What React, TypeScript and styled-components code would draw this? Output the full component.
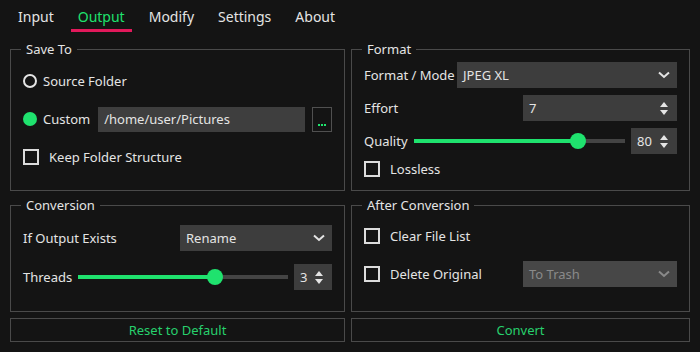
import React from "react";
import styled, { createGlobalStyle } from "styled-components";

const GREEN = "#1fe26e";
const TEXT = "#e4e4e4";
const LINE = "#4a4a4a";

const GlobalStyle = createGlobalStyle`
  html, body { margin: 0; padding: 0; background: #141414; }
  body {
    font-family: "Noto Sans", "Open Sans", sans-serif;
    font-size: 13px;
    color: ${TEXT};
  }
  * { box-sizing: border-box; }
`;

const Window = styled.div`
  width: 700px;
  height: 352px;
  display: flex;
  flex-direction: column;
`;

const TabBar = styled.div`
  display: flex;
  gap: 10px;
  padding-left: 11px;
  height: 32px;
`;

const Tab = styled.div<{ $active?: boolean }>`
  display: flex;
  align-items: center;
  padding: 3px 7px 0;
  font-size: 14px;
  color: ${(p) => (p.$active ? GREEN : TEXT)};
  border-bottom: 3px solid ${(p) => (p.$active ? "#e2195b" : "transparent")};
`;

const Body = styled.div`
  flex: 1;
  display: grid;
  grid-template-columns: 335px 1fr;
  grid-template-rows: 150px 115px 24px;
  gap: 6px;
  padding: 9px 10px 10px;
`;

const Group = styled.fieldset<{ $pt: number; $gap?: number }>`
  margin: 0;
  min-width: 0;
  border: 1px solid ${LINE};
  padding: ${(p) => p.$pt}px 12px 0 12px;
  display: flex;
  flex-direction: column;
  gap: ${(p) => p.$gap ?? 12}px;
`;

const Legend = styled.legend`
  margin-left: -2px;
  padding: 0 5px;
  font-size: 13px;
  line-height: 16px;
  color: ${TEXT};
`;

const Row = styled.div<{ $h?: number; $gap?: number }>`
  display: flex;
  align-items: center;
  gap: ${(p) => p.$gap ?? 7}px;
  height: ${(p) => p.$h ?? 26}px;
  flex-shrink: 0;
`;

const Label = styled.span`
  white-space: nowrap;
  flex-shrink: 0;
`;

const Radio = styled.span<{ $checked?: boolean }>`
  width: 14px;
  height: 14px;
  border-radius: 50%;
  flex-shrink: 0;
  margin-right: -1px;
  border: ${(p) => (p.$checked ? "none" : `2px solid ${TEXT}`)};
  background: ${(p) => (p.$checked ? GREEN : "transparent")};
`;

const Check = styled.span`
  width: 16px;
  height: 16px;
  flex-shrink: 0;
  border: 2px solid #dcdcdc;
  margin-right: 3px;
`;

const PathInput = styled.input`
  flex: 1;
  min-width: 0;
  height: 25px;
  border: none;
  outline: none;
  background: #3e3e3e;
  color: ${TEXT};
  font: inherit;
  padding: 0 6px;
  margin-left: 1px;
`;

const Browse = styled.button`
  width: 20px;
  height: 25px;
  padding: 0 0 5px;
  background: transparent;
  border: 1px solid #505050;
  display: flex;
  align-items: flex-end;
  justify-content: center;
  gap: 1px;
`;

const Dot = styled.span`
  width: 2px;
  height: 2px;
  background: ${GREEN};
`;

const Field = styled.div<{ $w?: number; $disabled?: boolean }>`
  width: ${(p) => (p.$w ? `${p.$w}px` : "auto")};
  margin-left: auto;
  height: 26px;
  flex-shrink: 0;
  display: flex;
  align-items: center;
  justify-content: space-between;
  padding: 0 7px 0 6px;
  background: ${(p) => (p.$disabled ? "#474747" : "#3d3d3d")};
  color: ${(p) => (p.$disabled ? "#8a8a8a" : TEXT)};
`;

const SliderTrack = styled.div`
  flex: 1;
  height: 16px;
  position: relative;
  &::before {
    content: "";
    position: absolute;
    left: 0;
    right: 0;
    top: 6px;
    height: 4px;
    background: #444;
  }
`;

const SliderFill = styled.div`
  position: absolute;
  left: 0;
  top: 6px;
  height: 4px;
  background: ${GREEN};
`;

const SliderHandle = styled.div`
  position: absolute;
  top: 0;
  width: 16px;
  height: 16px;
  border-radius: 50%;
  background: ${GREEN};
`;

const ActionButton = styled.button`
  background: transparent;
  border: 1px solid ${LINE};
  color: #27d06d;
  font: inherit;
  font-size: 13px;
  padding: 0;
`;

const Chevron = ({ color }: { color: string }) => (
  <svg width="12" height="8" viewBox="0 0 12 8">
    <polyline points="1,1.5 6,6 11,1.5" fill="none" stroke={color} strokeWidth="2" />
  </svg>
);

const Arrows = () => (
  <svg width="8" height="15" viewBox="0 0 8 15">
    <polygon points="0,6 4,1 8,6" fill="#e4e4e4" />
    <polygon points="0,9 8,9 4,14" fill="#e4e4e4" />
  </svg>
);

const Select = ({ value, width, disabled }: { value: string; width: number; disabled?: boolean }) => (
  <Field $w={width} $disabled={disabled}>
    <span>{value}</span>
    <Chevron color={disabled ? "#8a8a8a" : "#e4e4e4"} />
  </Field>
);

const Spin = ({ value, width }: { value: string; width: number }) => (
  <Field $w={width} style={{ paddingRight: 9 }}>
    <span>{value}</span>
    <Arrows />
  </Field>
);

const Slider = ({ value, min, max }: { value: number; min: number; max: number }) => {
  const f = (value - min) / (max - min);
  return (
    <SliderTrack>
      <SliderFill style={{ width: `calc(${f} * (100% - 16px) + 8px)` }} />
      <SliderHandle style={{ left: `calc(${f} * (100% - 16px))` }} />
    </SliderTrack>
  );
};

export default function App() {
  return (
    <Window>
      <GlobalStyle />
      <TabBar>
        <Tab>Input</Tab>
        <Tab $active>Output</Tab>
        <Tab>Modify</Tab>
        <Tab>Settings</Tab>
        <Tab>About</Tab>
      </TabBar>
      <Body>
        <Group $pt={11}>
          <Legend>Save To</Legend>
          <Row>
            <Radio />
            <Label>Source Folder</Label>
          </Row>
          <Row>
            <Radio $checked />
            <Label>Custom</Label>
            <PathInput readOnly value="/home/user/Pictures" />
            <Browse>
              <Dot />
              <Dot />
              <Dot />
            </Browse>
          </Row>
          <Row>
            <Check />
            <Label>Keep Folder Structure</Label>
          </Row>
        </Group>

        <Group $pt={5} $gap={7}>
          <Legend>Format</Legend>
          <Row $gap={2}>
            <Label>Format / Mode</Label>
            <Select value="JPEG XL" width={220} />
          </Row>
          <Row>
            <Label>Effort</Label>
            <Spin value="7" width={154} />
          </Row>
          <Row $gap={6}>
            <Label>Quality</Label>
            <Slider value={80} min={0} max={100} />
            <Spin value="80" width={46} />
          </Row>
          <Row $h={16}>
            <Check />
            <Label>Lossless</Label>
          </Row>
        </Group>

        <Group $pt={12} $gap={13}>
          <Legend>Conversion</Legend>
          <Row>
            <Label>If Output Exists</Label>
            <Select value="Rename" width={152} />
          </Row>
          <Row $gap={6}>
            <Label>Threads</Label>
            <Slider value={3} min={1} max={4} />
            <Spin value="3" width={38} />
          </Row>
        </Group>

        <Group $pt={10}>
          <Legend>After Conversion</Legend>
          <Row>
            <Check />
            <Label>Clear File List</Label>
          </Row>
          <Row>
            <Check />
            <Label>Delete Original</Label>
            <Select value="To Trash" width={154} disabled />
          </Row>
        </Group>

        <ActionButton>Reset to Default</ActionButton>
        <ActionButton>Convert</ActionButton>
      </Body>
    </Window>
  );
}
